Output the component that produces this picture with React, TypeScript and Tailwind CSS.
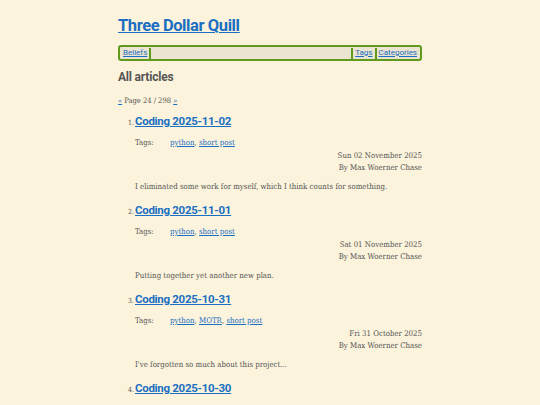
import React from "react";

interface Article {
  title: string;
  tags?: string[];
  date?: string;
  summary?: string;
}

// last entry is only partly on screen, so just its title
const articles: Article[] = [
  {
    title: "Coding 2025-11-02",
    tags: ["python", "short post"],
    date: "Sun 02 November 2025",
    summary: "I eliminated some work for myself, which I think counts for something.",
  },
  {
    title: "Coding 2025-11-01",
    tags: ["python", "short post"],
    date: "Sat 01 November 2025",
    summary: "Putting together yet another new plan.",
  },
  {
    title: "Coding 2025-10-31",
    tags: ["python", "MOTR", "short post"],
    date: "Fri 31 October 2025",
    summary: "I've forgotten so much about this project...",
  },
  { title: "Coding 2025-10-30" },
];

const heading = { fontFamily: 'Roboto, "Noto Sans", sans-serif' };
const body = { fontFamily: '"DejaVu Serif Condensed", "Liberation Serif", serif' };

const App = () => {
  return (
    <div className="h-[405px] overflow-hidden bg-[#fbf3dc] text-[#555]" style={body}>
      <div className="mx-auto w-[304px] pt-[14px]">
        <h1
          className="text-[16.5px] font-bold leading-[24px] text-[#1b6fc2] underline tracking-[-0.4px]"
          style={heading}
        >
          <a href="#">Three Dollar Quill</a>
        </h1>

        {/* Nav */}
        <div
          className="mt-[7px] flex h-[16px] items-center rounded-[3px] border-2 border-[#5f9a1d] bg-[#ebe4d0] px-[1px] text-[8px] text-[#1b6fc2]"
          style={heading}
        >
          <a href="#" className="underline px-[2px]">Beliefs</a>
          <span className="h-[11px] w-[2px] bg-[#5f9a1d]" />
          <span className="flex-1" />
          <span className="h-[11px] w-[2px] bg-[#5f9a1d]" />
          <a href="#" className="underline px-[2px]">Tags</a>
          <span className="h-[11px] w-[2px] bg-[#5f9a1d]" />
          <a href="#" className="underline px-[2px]">Categories</a>
        </div>

        <h2
          className="mt-[7px] text-[12px] font-bold leading-[18px] text-[#555] tracking-[-0.2px]"
          style={heading}
        >
          All articles
        </h2>

        <div className="mt-[10px] text-[7.5px] leading-[10px] text-[#555]">
          <a href="#" className="text-[#1b6fc2] underline">«</a> Page 24 / 298{" "}
          <a href="#" className="text-[#1b6fc2] underline">»</a>
        </div>

        <ol className="mt-[6px] pl-[17px]">
          {articles.map((a, i) => (
            <li key={a.title} className="mb-[9px]">
              <div className="flex items-baseline">
                <span className="w-[7px] -ml-[8px] mr-[1px] text-[7px] text-right">{i + 1}.</span>
                <a
                  href="#"
                  className="text-[11.5px] font-bold leading-[18px] text-[#1b6fc2] underline tracking-[-0.3px]"
                  style={heading}
                >
                  {a.title}
                </a>
              </div>
              {a.tags && (
                <>
                  <div className="mt-[8px] flex text-[7.8px] leading-[10px]">
                    <span className="w-[35px]">Tags:</span>
                    <span>
                      {a.tags.map((t, j) => (
                        <React.Fragment key={t}>
                          <a href="#" className="text-[#1b6fc2] underline">{t}</a>
                          {j < a.tags!.length - 1 ? ", " : ""}
                        </React.Fragment>
                      ))}
                    </span>
                  </div>
                  <div className="mt-[2px] text-right text-[7.8px] leading-[12px]">
                    <div>{a.date}</div>
                    <div>By Max Woerner Chase</div>
                  </div>
                  <p className="mt-[8px] text-[7.8px] leading-[10px]">{a.summary}</p>
                </>
              )}
            </li>
          ))}
        </ol>
      </div>
    </div>
  );
};

export default App;
